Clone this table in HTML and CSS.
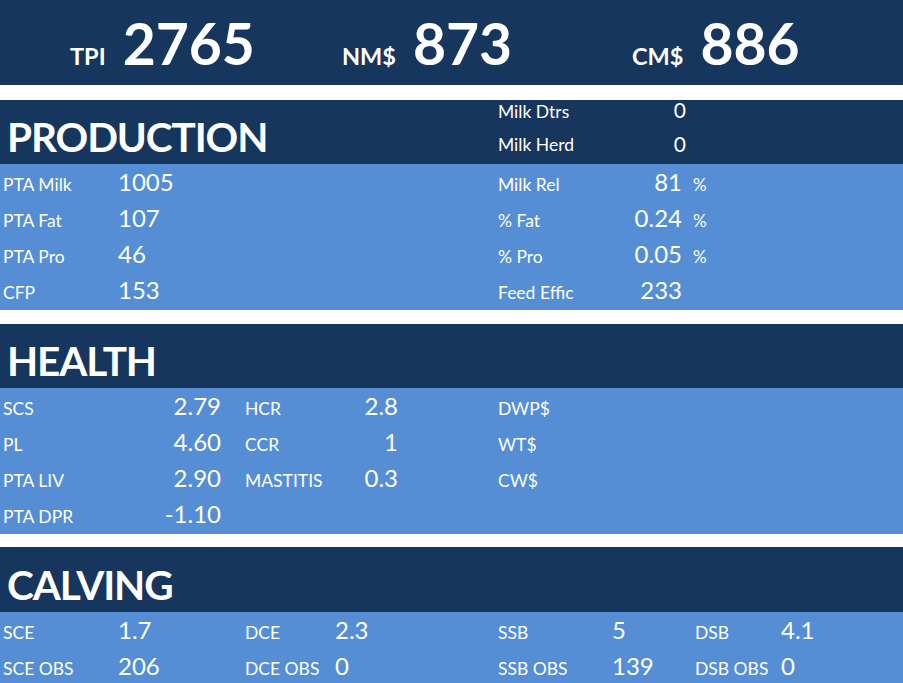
FILE: index.html
```html
<!DOCTYPE html>
<html>
<head>
<meta charset="utf-8">
<link rel="stylesheet" href="styles.css">
</head>
<body>
<div class="page">
  <div class="kpis">
    <div class="kpi k1"><span class="klabel">TPI</span><span class="kval">2765</span></div>
    <div class="kpi k2"><span class="klabel">NM$</span><span class="kval">873</span></div>
    <div class="kpi k3"><span class="klabel">CM$</span><span class="kval">886</span></div>
  </div>

  <section class="sec">
    <div class="head prod-head">
      <div class="title">PRODUCTION</div>
      <div class="hl r1">Milk Dtrs</div><div class="hv r1">0</div>
      <div class="hl r2">Milk Herd</div><div class="hv r2">0</div>
    </div>
    <div class="body">
      <div class="row prod">
        <span class="lab">PTA Milk</span><span class="val">1005</span>
        <span class="lab">Milk Rel</span><span class="val right">81</span><span class="unit">%</span>
      </div>
      <div class="row prod">
        <span class="lab">PTA Fat</span><span class="val">107</span>
        <span class="lab">% Fat</span><span class="val right">0.24</span><span class="unit">%</span>
      </div>
      <div class="row prod">
        <span class="lab">PTA Pro</span><span class="val">46</span>
        <span class="lab">% Pro</span><span class="val right">0.05</span><span class="unit">%</span>
      </div>
      <div class="row prod">
        <span class="lab">CFP</span><span class="val">153</span>
        <span class="lab">Feed Effic</span><span class="val right">233</span><span class="unit"></span>
      </div>
    </div>
  </section>

  <section class="sec">
    <div class="head"><div class="title">HEALTH</div></div>
    <div class="body">
      <div class="row health">
        <span class="lab">SCS</span><span class="val right">2.79</span>
        <span class="lab">HCR</span><span class="val right">2.8</span>
        <span class="lab">DWP$</span>
      </div>
      <div class="row health">
        <span class="lab">PL</span><span class="val right">4.60</span>
        <span class="lab">CCR</span><span class="val right">1</span>
        <span class="lab">WT$</span>
      </div>
      <div class="row health">
        <span class="lab">PTA LIV</span><span class="val right">2.90</span>
        <span class="lab">MASTITIS</span><span class="val right">0.3</span>
        <span class="lab">CW$</span>
      </div>
      <div class="row health">
        <span class="lab">PTA DPR</span><span class="val right">-1.10</span>
        <span class="lab"></span><span class="val"></span>
        <span class="lab"></span>
      </div>
    </div>
  </section>

  <section class="sec last">
    <div class="head calv-head"><div class="title">CALVING</div></div>
    <div class="body">
      <div class="row calv">
        <span class="lab">SCE</span><span class="val">1.7</span>
        <span class="lab">DCE</span><span class="val">2.3</span>
        <span class="lab">SSB</span><span class="val">5</span>
        <span class="lab">DSB</span><span class="val">4.1</span>
      </div>
      <div class="row calv">
        <span class="lab">SCE OBS</span><span class="val">206</span>
        <span class="lab">DCE OBS</span><span class="val">0</span>
        <span class="lab">SSB OBS</span><span class="val">139</span>
        <span class="lab">DSB OBS</span><span class="val">0</span>
      </div>
    </div>
  </section>
</div>
</body>
</html>
```

FILE: styles.css
```css
html, body {
  margin: 0;
  padding: 0;
  background: #ffffff;
}
body {
  font-family: Lato, "Noto Sans", "Liberation Sans", sans-serif;
  color: #ffffff;
}
.page {
  width: 903px;
  height: 683px;
  overflow: hidden;
}

/* KPI bar */
.kpis {
  background: #17365d;
  height: 85px;
  box-sizing: border-box;
  padding: 15px 0 0 70px;
  display: grid;
  grid-template-columns: 272px 290px auto;
  align-items: baseline;
}
.kpi {
  display: flex;
  align-items: baseline;
}
.klabel {
  font-weight: 700;
  font-size: 23.5px;
  line-height: 1;
  margin-right: 17px;
}
.kval {
  font-weight: 700;
  font-size: 57px;
  line-height: 57px;
}

/* Sections */
.sec {
  margin-top: 14px;
}
.sec:nth-child(2) {
  margin-top: 15px;
}
.sec.last {
  margin-top: 13px;
}
.head {
  background: #17365d;
  height: 64px;
  display: grid;
  grid-template-columns: 1fr;
  align-items: end;
}
.calv-head {
  height: 65px;
}
.title {
  font-weight: 700;
  font-size: 40.5px;
  line-height: 55px;
  padding-left: 7px;
  letter-spacing: -1.1px;
}
.prod-head {
  grid-template-columns: 498px 120px 68px auto;
  grid-template-rows: 32px 32px;
}
.prod-head .title {
  grid-column: 1;
  grid-row: 1 / 3;
  align-self: end;
}
.hl, .hv {
  align-self: end;
  font-size: 17.5px;
  line-height: 20px;
}
.hl { grid-column: 2; padding-bottom: 9px; }
.hv {
  grid-column: 3;
  text-align: right;
  font-size: 21px;
  line-height: 24px;
  padding-bottom: 8px;
}
.hl.r1, .hv.r1 { grid-row: 1; padding-bottom: 10px; }
.hl.r2, .hv.r2 { grid-row: 2; }

.body {
  background: #558ed5;
  padding-bottom: 2px;
}
.row {
  display: grid;
  height: 36px;
  align-items: baseline;
}
.lab {
  font-size: 17.5px;
  line-height: 20px;
  padding-left: 3px;
  white-space: nowrap;
}
.val {
  font-size: 24px;
  line-height: 36px;
  white-space: nowrap;
}
.val.right {
  text-align: right;
}
.unit {
  font-size: 17px;
  line-height: 20px;
  padding-left: 11px;
}

.prod {
  grid-template-columns: 118px 377px 120px 67px auto;
}
.health {
  grid-template-columns: 110px 111px 130px 47px auto;
}
.health .lab:nth-child(3) { padding-left: 24px; }
.health .lab:nth-child(5) { padding-left: 100px; }
.calv {
  grid-template-columns: 118px 124px 93px 160px 117px 80px 89px auto;
}
```
